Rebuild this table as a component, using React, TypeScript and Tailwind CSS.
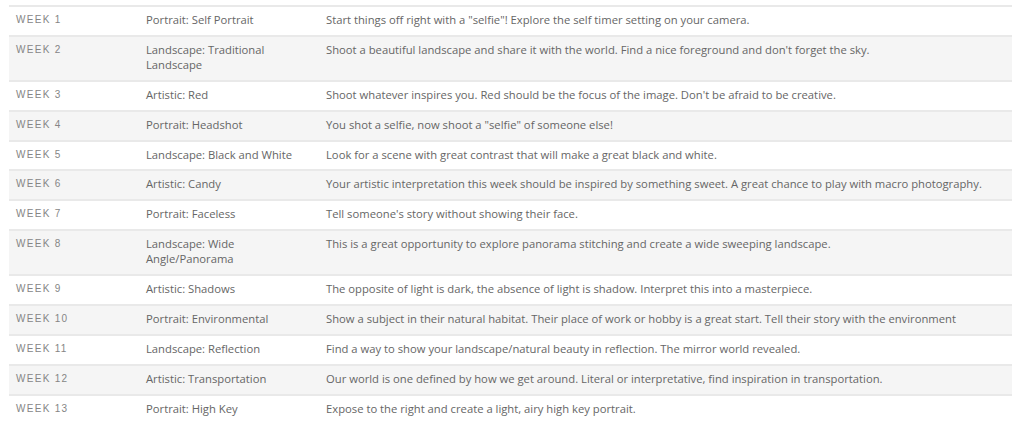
import React from "react";

const rows: [string, string, string][] = [
  ["WEEK 1", "Portrait: Self Portrait", "Start things off right with a \"selfie\"! Explore the self timer setting on your camera."],
  ["WEEK 2", "Landscape: Traditional Landscape", "Shoot a beautiful landscape and share it with the world. Find a nice foreground and don't forget the sky."],
  ["WEEK 3", "Artistic: Red", "Shoot whatever inspires you. Red should be the focus of the image. Don't be afraid to be creative."],
  ["WEEK 4", "Portrait: Headshot", "You shot a selfie, now shoot a \"selfie\" of someone else!"],
  ["WEEK 5", "Landscape: Black and White", "Look for a scene with great contrast that will make a great black and white."],
  ["WEEK 6", "Artistic: Candy", "Your artistic interpretation this week should be inspired by something sweet. A great chance to play with macro photography."],
  ["WEEK 7", "Portrait: Faceless", "Tell someone's story without showing their face."],
  ["WEEK 8", "Landscape: Wide Angle/Panorama", "This is a great opportunity to explore panorama stitching and create a wide sweeping landscape."],
  ["WEEK 9", "Artistic: Shadows", "The opposite of light is dark, the absence of light is shadow. Interpret this into a masterpiece."],
  ["WEEK 10", "Portrait: Environmental", "Show a subject in their natural habitat. Their place of work or hobby is a great start. Tell their story with the environment"],
  ["WEEK 11", "Landscape: Reflection", "Find a way to show your landscape/natural beauty in reflection. The mirror world revealed."],
  ["WEEK 12", "Artistic: Transportation", "Our world is one defined by how we get around. Literal or interpretative, find inspiration in transportation."],
  ["WEEK 13", "Portrait: High Key", "Expose to the right and create a light, airy high key portrait."],
];

export default function App() {
  return (
    <div className="w-[1024px] h-[423px] overflow-hidden bg-white pt-[5px] pl-[9px]">
      <div className="w-[1003px] flex flex-col">
        {rows.map((r, i) => (
          <div
            key={i}
            className={`flex border-t-2 border-[#e9e9e9] pt-[5px] pb-[7.9px] text-[11.25px] leading-[15px] text-[#666666] ${i % 2 === 1 ? "bg-[#f5f5f5]" : "bg-white"}`}
            style={{ fontFamily: '"Open Sans", sans-serif' }}
          >
            <div
              className="w-[130px] shrink-0 pl-[7px] text-[10px] tracking-[1.3px] text-[#858585]"
              style={{ fontFamily: '"Liberation Sans", sans-serif' }}
            >
              {r[0]}
            </div>
            <div className="w-[180px] shrink-0 pl-[7px] pr-[8px]">{r[1]}</div>
            <div className="flex-1 pl-[7px] pr-[7px]">{r[2]}</div>
          </div>
        ))}
      </div>
    </div>
  );
}
